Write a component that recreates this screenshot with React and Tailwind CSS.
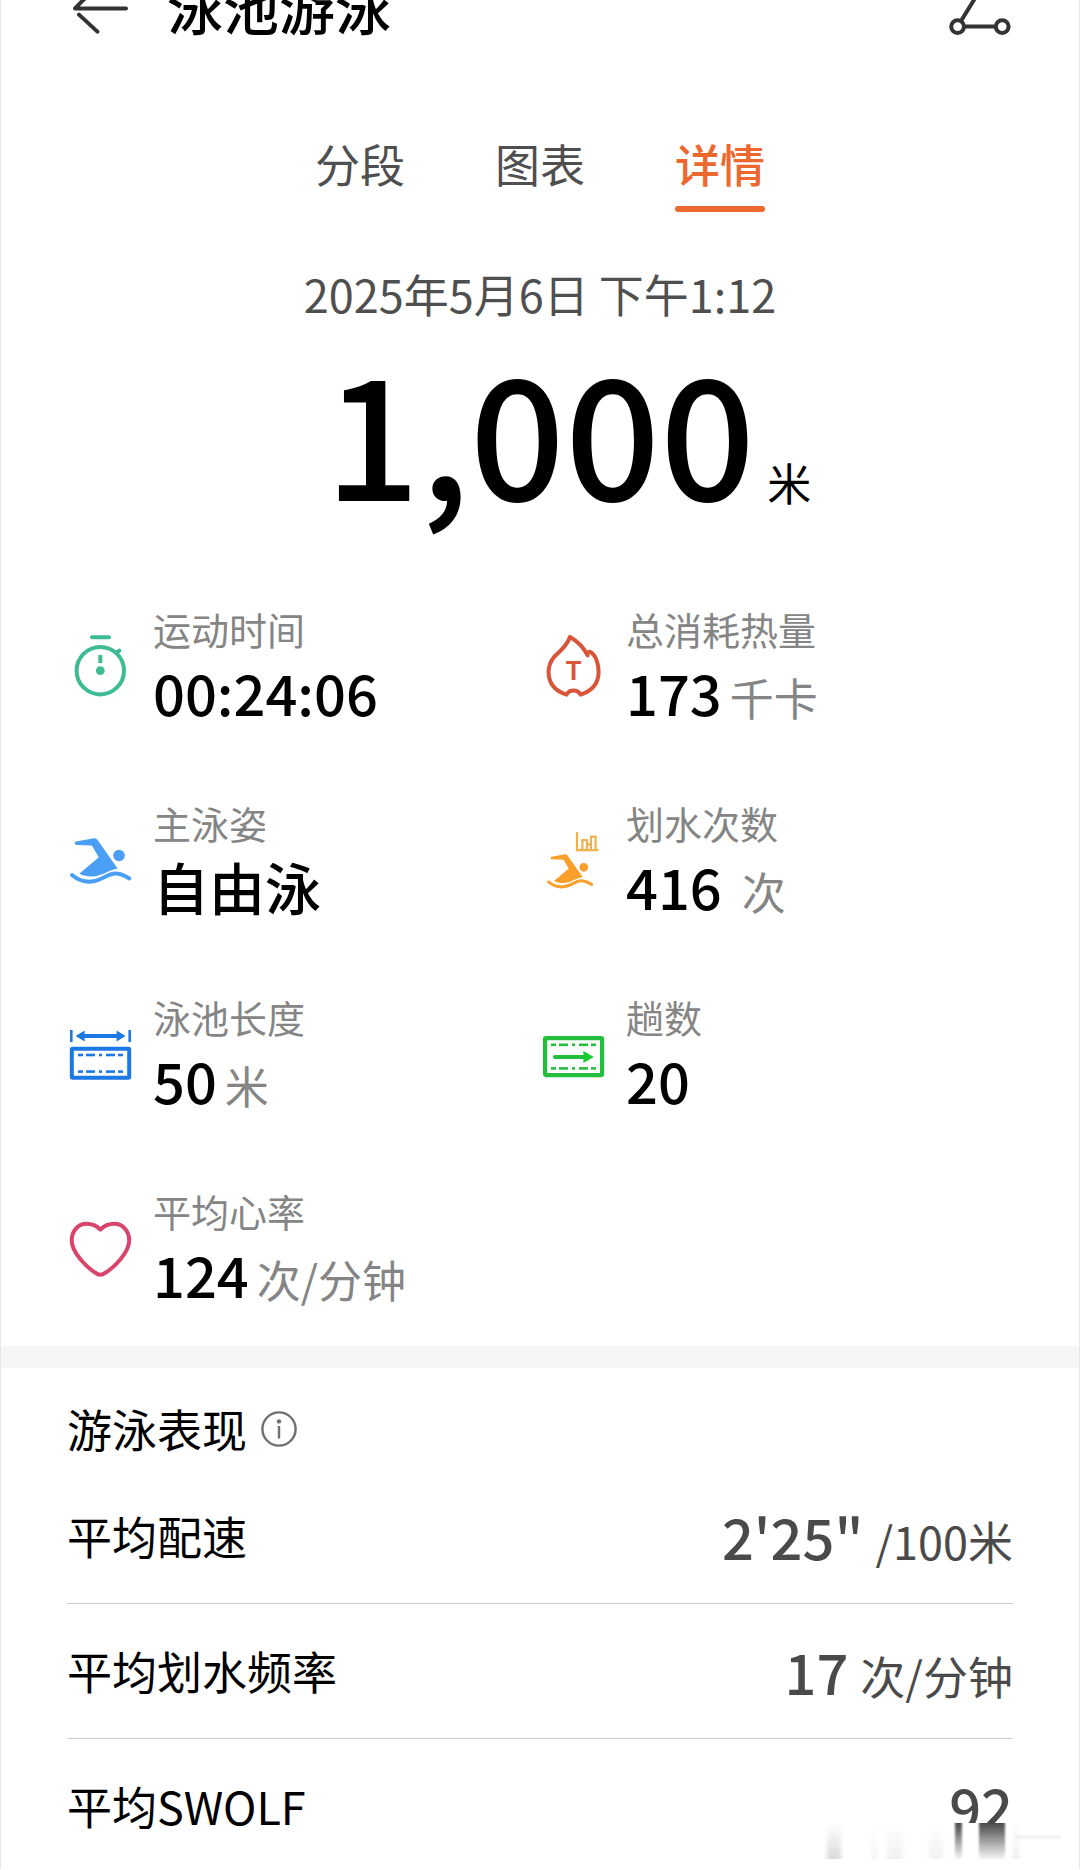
import React from 'react'

const TABS = ['分段', '图表', '详情']

const DASHES = [[11, 16], [19, 28], [32, 35], [39, 48], [51, 56]]

const DashedLane = ({ y }) => (
    <g strokeWidth="2.6">
        {DASHES.map(([from, to]) => (
            <path key={from} d={`M${from} ${y}H${to}`} />
        ))}
    </g>
)

const IconBox = ({ children }) => (
    <svg viewBox="0 0 66 66" className="w-[66px] h-[66px] flex-shrink-0" fill="none" aria-hidden="true">
        {children}
    </svg>
)

const SwimmerShape = ({ color }) => (
    <g>
        <path
            d="M9 12.4L27 9.2Q29.2 9 30.4 10.8L50.6 39.6C42 41 35 47.4 25 47.6C20 47.6 16 46.6 12.3 44.8L31.8 28.2L24.8 16.6L9 15.9Q6.4 14 9 12.4Z"
            fill={color}
        />
        <circle cx="52" cy="26.5" r="5.8" fill={color} />
        <path
            d="M5 46C11 51 18 53 24 52.6C34 52 40 45 48 44.6C54 44.4 58 47 62.4 49.4"
            stroke={color}
            strokeWidth="4"
            strokeLinecap="round"
        />
    </g>
)

const StopwatchIcon = () => (
    <IconBox>
        <g stroke="#3dbb93" strokeWidth="4" strokeLinecap="round">
            <circle cx="33.3" cy="35.7" r="23.7" />
            <path d="M25 2.2H42" />
            <path d="M50 17.4L52.4 15.6" />
            <path d="M33.3 20V28" strokeLinecap="butt" />
        </g>
        <circle cx="33.3" cy="35.7" r="4.4" fill="#3dbb93" />
    </IconBox>
)

const CaloriesIcon = () => (
    <IconBox>
        <path
            d="M30 2C27 11 20 16 14 22C10 27 8.6 31 8.6 37C8.6 48 15 56 26.5 59.6C28 56.6 30.5 55.4 33.5 55.4C36.5 55.4 39 56.6 40.5 59.6C52 56 58.6 48 58.6 37C58.6 29 56 20 50 16.8C48 17 47 18 47.6 20.4C43 11 36 5.4 30 2Z"
            stroke="#d9553a"
            strokeWidth="4"
            strokeLinejoin="round"
        />
        <text x="33.5" y="45" textAnchor="middle" fontSize="25" fontWeight="700" fontFamily="Inter, sans-serif" fill="#d9553a">
            T
        </text>
    </IconBox>
)

const SwimStyleIcon = () => (
    <IconBox>
        <SwimmerShape color="#4a9ff5" />
    </IconBox>
)

const StrokesIcon = () => (
    <IconBox>
        <g transform="translate(4.8 18.4) scale(0.75)">
            <SwimmerShape color="#f9a02c" />
        </g>
        <g stroke="#efb04e" strokeWidth="2.2">
            <path d="M37 3V21.2H58.4" />
            <path d="M42.4 21V11H47V21M47 15.4H51V21M51 21V7.6H55.6V21" />
        </g>
    </IconBox>
)

const PoolLengthIcon = () => (
    <IconBox>
        <g stroke="#1c78e2">
            <path d="M4.3 7V19M62.7 7V19" strokeWidth="2.6" />
            <path d="M15 13H52" strokeWidth="4" />
            <rect x="4.8" y="25.8" width="57.4" height="29" rx="1" strokeWidth="4" />
            <DashedLane y={32} />
            <DashedLane y={48.6} />
        </g>
        <path d="M8.6 13L17.6 7.6V18.4ZM58.6 13L49.6 7.6V18.4Z" fill="#1c78e2" />
    </IconBox>
)

const LapsIcon = () => (
    <IconBox>
        <g stroke="#24bd3e">
            <rect x="5.1" y="15.1" width="57" height="37" rx="1" strokeWidth="4.2" />
            <path d="M15 34H45" strokeWidth="4" strokeLinecap="round" />
            <DashedLane y={21.8} />
            <DashedLane y={45.4} />
        </g>
        <path d="M43.4 28L53.8 34L43.4 40Z" fill="#14cc30" />
    </IconBox>
)

const HeartIcon = () => (
    <IconBox>
        <path
            d="M33.4 12.6C29.4 8.6 24.6 6.8 19.6 6.8C11 6.8 4.7 14 4.7 23.4C4.7 35 19 50 30 56.8Q33.4 58.8 36.8 56.8C48 50 62.2 35 62.2 23.4C62.2 14 55.8 6.8 47.2 6.8C42.2 6.8 37.4 8.6 33.4 12.6Z"
            stroke="#d8446a"
            strokeWidth="4"
            strokeLinejoin="round"
        />
    </IconBox>
)

const METRICS = [
    { label: '运动时间', value: '00:24:06', Icon: StopwatchIcon },
    { label: '总消耗热量', value: '173', unit: '千卡', Icon: CaloriesIcon },
    { label: '主泳姿', value: '自由泳', Icon: SwimStyleIcon },
    { label: '划水次数', value: '416', unit: '次', spaced: true, Icon: StrokesIcon },
    { label: '泳池长度', value: '50', unit: '米', Icon: PoolLengthIcon },
    { label: '趟数', value: '20', Icon: LapsIcon },
    { label: '平均心率', value: '124', unit: '次/分钟', Icon: HeartIcon }
]

const PERFORMANCE = [
    { label: '平均配速', value: '2\'25"', unit: '/100米' },
    { label: '平均划水频率', value: '17', unit: '次/分钟' },
    { label: '平均SWOLF', value: '92' }
]

const Metric = ({ label, value, unit, spaced, Icon }) => (
    <div className="flex items-center gap-5">
        <Icon />
        <div className="pb-0.5 whitespace-nowrap">
            <p className="text-[38px] leading-[50px] text-[#858585]">{label}</p>
            <p className={`flex items-baseline ${spaced ? 'gap-5' : 'gap-2'}`}>
                <span className="text-[56px] leading-[76px] font-medium text-black">{value}</span>
                {unit && <span className="text-[44px] leading-none text-[#858585]">{unit}</span>}
            </p>
        </div>
    </div>
)

const STREAKS = [
    { x: 12, width: 14, opacity: 0.3 },
    { x: 56, width: 6, opacity: 0.08 },
    { x: 72, width: 16, opacity: 0.12 },
    { x: 114, width: 14, opacity: 0.1 },
    { x: 198, width: 6, opacity: 0.14 }
]

// Soft fade that hides the lower edge of the last row
const BottomFade = () => (
    <svg viewBox="0 0 246 46" className="absolute right-[-48px] bottom-0 w-[246px] h-[46px] pointer-events-none" aria-hidden="true">
        <defs>
            <linearGradient id="fadeOut" x1="0" y1="0" x2="0" y2="1">
                <stop offset="0" stopColor="#4a4a4a" />
                <stop offset="1" stopColor="#4a4a4a" stopOpacity="0.05" />
            </linearGradient>
            <linearGradient id="fadeIn" x1="0" y1="0" x2="0" y2="1">
                <stop offset="0" stopColor="#888" stopOpacity="0" />
                <stop offset="1" stopColor="#888" />
            </linearGradient>
            <filter id="soften" x="-20%" width="140%">
                <feGaussianBlur stdDeviation="2 0" />
            </filter>
            <filter id="softenEdge" x="-20%" width="140%">
                <feGaussianBlur stdDeviation="1 0" />
            </filter>
        </defs>
        <rect width="246" height="46" fill="#fff" />
        {STREAKS.map(({ x, width, opacity }) => (
            <rect key={x} x={x} y="0" width={width} height="36" fill="url(#fadeIn)" opacity={opacity} filter="url(#soften)" />
        ))}
        <rect x="140" y="0" width="7" height="36" fill="url(#fadeOut)" filter="url(#softenEdge)" />
        <rect x="164" y="0" width="26" height="36" fill="url(#fadeOut)" filter="url(#softenEdge)" />
        <path d="M200 14H246" stroke="#f4f4f4" strokeWidth="4" />
    </svg>
)

const PerformanceRow = ({ label, value, unit, isLast }) => (
    <div
        className={`relative flex items-center justify-between pt-[29px] whitespace-nowrap ${
            isLast ? 'pb-[25px]' : 'pb-[29px] border-b border-[#cfcfcf]'
        }`}
    >
        <dt className="text-[45px] leading-[64px] text-black">{label}</dt>
        <dd className="flex items-baseline gap-3 text-[#4a4a4a]">
            <span className="text-[56px] leading-[76px] font-medium">{value}</span>
            {unit && <span className="text-[45px] leading-none">{unit}</span>}
        </dd>
        {isLast && <BottomFade />}
    </div>
)

const App = () => {
    const [activeTab, setActiveTab] = React.useState('详情')

    return (
        <div className="overflow-hidden bg-white border-x border-[#e6e6e6] font-['Noto_Sans_CJK_SC',sans-serif]">
            {/* Header, scrolled partly out of view */}
            <header className="-mt-6 h-[60px] px-[66px] flex items-center gap-8">
                <button type="button" aria-label="返回">
                    <svg viewBox="0 0 68 68" className="w-[68px] h-[68px]" fill="none" stroke="#333" strokeWidth="4" strokeLinecap="round" strokeLinejoin="round">
                        <path d="M59 36.4H8L31 13M12 42.6L30.4 59.6" />
                    </svg>
                </button>
                <h1 className="flex-1 text-[56px] leading-[60px] font-medium text-black">泳池游泳</h1>
                <button type="button" aria-label="分享">
                    <svg viewBox="0 0 68 68" className="w-[68px] h-[68px]" fill="none" stroke="#333" strokeWidth="4">
                        <circle cx="12.6" cy="54.6" r="6.4" />
                        <circle cx="57.2" cy="54.6" r="6.4" />
                        <circle cx="35" cy="17" r="6.4" />
                        <path d="M19 54.6H50.8M16 49L32 23" />
                    </svg>
                </button>
            </header>

            <nav className="mt-24 flex justify-center gap-[90px]">
                {TABS.map((tab) => (
                    <button
                        key={tab}
                        type="button"
                        onClick={() => setActiveTab(tab)}
                        className={`flex flex-col gap-[10px] text-[45px] leading-[64px] ${
                            tab === activeTab ? 'font-medium text-[#ec682e]' : 'text-[#4f4f4f]'
                        }`}
                    >
                        {tab}
                        <span className={`w-full h-[6px] rounded-full ${tab === activeTab ? 'bg-[#ec682e]' : 'bg-transparent'}`} />
                    </button>
                ))}
            </nav>

            <p className="mt-[50px] text-center text-[45px] leading-[64px] text-[#4f4f4f]">2025年5月6日 下午1:12</p>

            <div className="mt-[22px] grid grid-cols-[1fr_auto_1fr] items-baseline gap-3 text-black">
                <span className="col-start-2 text-[167px] leading-[160px] font-medium">1,000</span>
                <span className="text-[44px] leading-none">米</span>
            </div>

            <section className="mt-24 px-[66px] grid grid-cols-2 gap-y-[66px]">
                {METRICS.map((metric) => (
                    <Metric key={metric.label} {...metric} />
                ))}
            </section>

            <div className="mt-8 h-[22px] bg-[#f6f6f6]" />

            <section className="pt-[29px] px-[66px]">
                <div className="pb-2 flex items-center gap-[14px]">
                    <h2 className="text-[45px] leading-[64px] text-black">游泳表现</h2>
                    <button type="button" aria-label="说明">
                        <svg viewBox="0 0 36 36" className="w-9 h-9" fill="none" stroke="#6f6f6f" strokeWidth="2.4">
                            <circle cx="18" cy="18" r="16.6" />
                            <path d="M18 15V27.6" />
                            <circle cx="18" cy="10.4" r="2.2" fill="#6f6f6f" stroke="none" />
                        </svg>
                    </button>
                </div>
                <dl>
                    {PERFORMANCE.map((row, idx) => (
                        <PerformanceRow key={row.label} {...row} isLast={idx === PERFORMANCE.length - 1} />
                    ))}
                </dl>
            </section>
        </div>
    )
}

export default App
